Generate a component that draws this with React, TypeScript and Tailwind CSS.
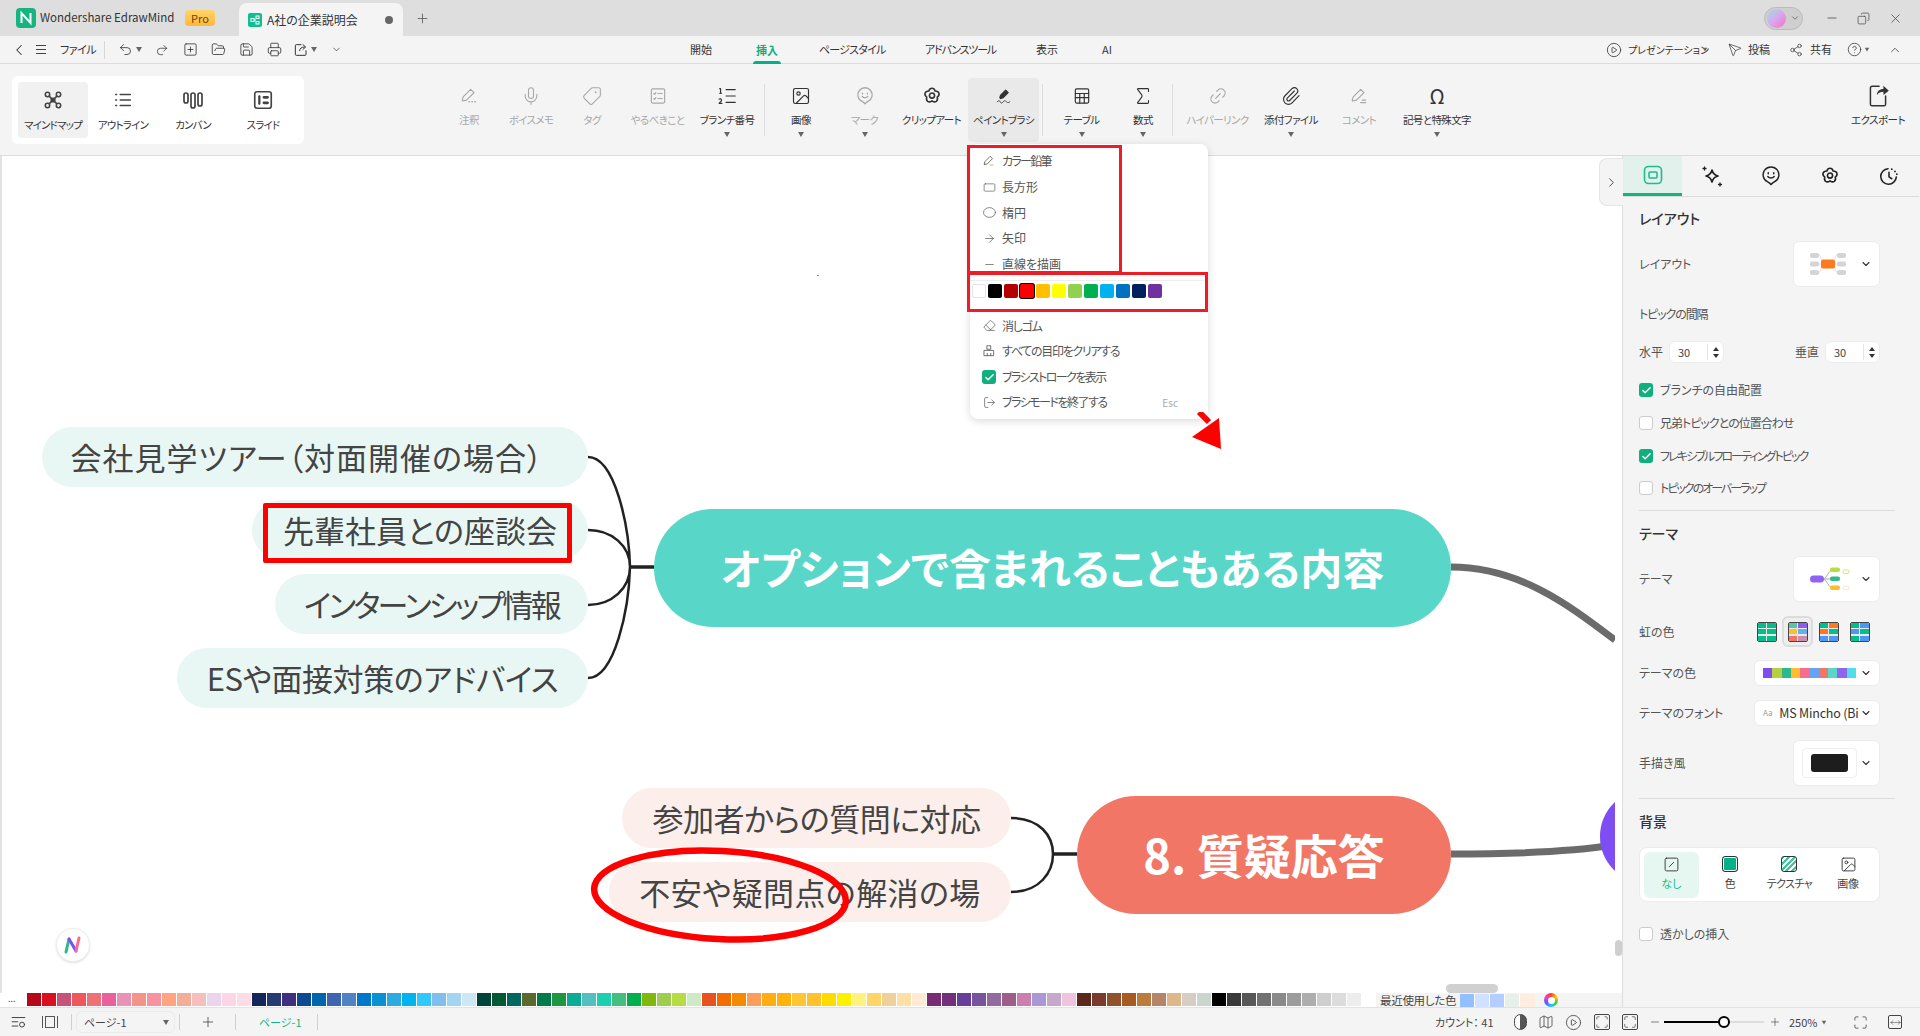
import React from 'react';
import {
  ChevronLeft, ChevronRight, ChevronDown, ChevronUp, Undo2, Redo2, SquarePlus, FolderOpen, Save, Printer, Plus, Minus, X, Copy,
  Mic, Tag, ListOrdered, Image, Sigma, Paperclip, Link2, CirclePlay, Send, Share2, CircleHelp, Check, SquareSlash,
  Eraser, LogOut, Square, Circle, ArrowRight, Map, Maximize, Scan, MoveHorizontal,
} from 'lucide-react';

const Caret = ({ className = '' }: { className?: string }) => (
  <span className={`inline-block w-0 h-0 border-x-[3.5px] border-x-transparent border-t-[5px] border-t-[#666] ${className}`} />
);

const S: React.FC<{ size?: number; children: React.ReactNode; sw?: number }> = ({ size = 20, children, sw = 1.4 }) => (
  <svg width={size} height={size} viewBox="0 0 24 24" fill="none" stroke="currentColor" strokeWidth={sw} strokeLinecap="round" strokeLinejoin="round">{children}</svg>
);

const MindIcon = () => (
  <S size={22} sw={1.7}><circle cx="6" cy="6" r="2.4" /><circle cx="18" cy="6" r="2.4" /><circle cx="6" cy="18" r="2.4" /><circle cx="18" cy="18" r="2.4" /><path d="M8 8l8 8M16 8l-8 8" /><circle cx="12" cy="12" r="2" /></S>
);
const OutlineIcon = () => (
  <S size={22} sw={1.7}><path d="M4 6h1M9 6h11M4 12h1M9 12h11M4 18h1M9 18h11" /></S>
);
const KanbanIcon = () => (
  <S size={24} sw={1.7}><rect x="3" y="5" width="4" height="10" rx="2" /><rect x="10" y="5" width="4" height="15" rx="2" /><rect x="17" y="5" width="4" height="13" rx="2" /></S>
);
const SlideIcon = () => (
  <S size={22} sw={1.8}><rect x="3" y="3" width="18" height="18" rx="2.5" /><path d="M8 8v8" strokeWidth="2.5" /><path d="M13 9h4M13 15h4" strokeWidth="3" /></S>
);
const NoteIcon = () => (
  <S><path d="M4 17l1-4L14 4l4 4-9 9-5 1z" /><path d="M12 19h.5M15.5 19h.5M19 19h.5" strokeWidth="1.8" /></S>
);
const TodoIcon = () => (
  <S><rect x="4" y="3.5" width="16" height="17" rx="1.5" /><path d="M7 9l1 1 1.5-2M12 9h5M7 15l1 1 1.5-2M12 15h5" /></S>
);
const PinSmile = ({ size = 20 }: { size?: number }) => (
  <S size={size} sw={1.6}><path d="M12 21.5c-1-1.5-2-2.2-3.6-3A8.6 8.6 0 1 1 15.6 18.5c-1.6.8-2.6 1.5-3.6 3z" /><path d="M9 8.5v1M15 8.5v1M8.5 12.5c1.8 2.2 5.2 2.2 7 0" /></S>
);
const Flower = ({ size = 20 }: { size?: number }) => (
  <S size={size} sw={1.7}><path d="M12 3.5c2 0 3 1.6 3.4 3 1.6 0 3.6.6 4.2 2.4.6 1.9-.7 3.3-1.9 4.2.5 1.5.6 3.6-1 4.8-1.6 1.1-3.4.3-4.7-.7-1.3 1-3.1 1.8-4.7.7-1.6-1.2-1.5-3.3-1-4.8-1.2-.9-2.5-2.3-1.9-4.2.6-1.8 2.6-2.4 4.2-2.4C9 5.1 10 3.5 12 3.5z" /><circle cx="12" cy="11.5" r="2.8" /></S>
);
const BrushIcon = () => (
  <S sw={1.5}><path d="M7 14l1-3 6-6 3 3-6 6-3 1z" fill="currentColor" /><path d="M4 19c1.5-2 2.5-2 3.5 0s2 2 3.5 0 2.5-1.5 4 0 2.5 1 4 0" strokeWidth="1" /></S>
);
const CalcTable = () => (
  <S><rect x="4" y="3.5" width="16" height="17" rx="1.5" /><path d="M4 9h16M4 14h16M9.3 9v11.5M14.7 9v11.5" /></S>
);
const CommentPen = () => (
  <S><path d="M4 17l1-4L14 4l4 4-9 9-5 1z" /><path d="M14 20h6M16 17h4" /></S>
);
const ExportIcon = () => (
  <S size={26} sw={1.4}><path d="M13 4H6.5A1.5 1.5 0 0 0 5 5.5v15A1.5 1.5 0 0 0 6.5 22h11a1.5 1.5 0 0 0 1.5-1.5V13" /><path d="M11 12c0-3.5 2.5-5.500 6-5.500V3.500l5 4.500-5 4V9c-2.500 0-4.500 1-6 3z" fill="currentColor" stroke="none" /></S>
);
const ShareBox = () => (
  <S size={16} sw={1.5}><path d="M12 4H5a1.500 1.500 0 0 0-1.500 1.500v13A1.500 1.500 0 0 0 5 20h13a1.500 1.500 0 0 0 1.500-1.500V13" /><path d="M10 13c0-3.500 3-5.500 7-5.500M15 4l4 3.500-4 3.500" /></S>
);

const modes = [
  { label: 'マインドマップ', icon: <MindIcon />, on: true },
  { label: 'アウトライン', icon: <OutlineIcon />, on: false },
  { label: 'カンバン', icon: <KanbanIcon />, on: false },
  { label: 'スライド', icon: <SlideIcon />, on: false },
];

const tools: { label: string; icon: React.ReactNode; w: string; off?: boolean; caret?: boolean; sel?: boolean; sep?: boolean }[] = [
  { label: '注釈', icon: <NoteIcon />, w: 'w-[62px]', off: true },
  { label: 'ボイスメモ', icon: <Mic size={20} strokeWidth={1.3} />, w: 'w-[62px]', off: true },
  { label: 'タグ', icon: <Tag size={20} strokeWidth={1.3} className="-scale-x-100" />, w: 'w-[60px]', off: true },
  { label: 'やるべきこと', icon: <TodoIcon />, w: 'w-[71px]', off: true },
  { label: 'ブランチ番号', icon: <ListOrdered size={22} strokeWidth={1.3} />, w: 'w-[68px]', caret: true, sep: true },
  { label: '画像', icon: <Image size={20} strokeWidth={1.4} />, w: 'w-[66px]', caret: true },
  { label: 'マーク', icon: <PinSmile />, w: 'w-[61px]', off: true, caret: true },
  { label: 'クリップアート', icon: <Flower size={22} />, w: 'w-[73px]' },
  { label: 'ペイントブラシ', icon: <BrushIcon />, w: 'w-[71px]', caret: true, sel: true, sep: true },
  { label: 'テーブル', icon: <CalcTable />, w: 'w-[71px]', caret: true },
  { label: '数式', icon: <Sigma size={22} strokeWidth={1.2} />, w: 'w-[52px]', caret: true, sep: true },
  { label: 'ハイパーリンク', icon: <Link2 size={20} strokeWidth={1.4} className="-rotate-45" />, w: 'w-[83px]', off: true },
  { label: '添付ファイル', icon: <Paperclip size={20} strokeWidth={1.4} />, w: 'w-[64px]', caret: true },
  { label: 'コメント', icon: <CommentPen />, w: 'w-[72px]', off: true },
  { label: '記号と特殊文字', icon: <span className="text-[20px] leading-5">Ω</span>, w: 'w-[84px]', caret: true },
];

const palette = [
  'bg-[#b5091a]', 'bg-[#d90f22]', 'bg-[#c9527b]', 'bg-[#f0575c]', 'bg-[#f07078]', 'bg-[#e9609e]', 'bg-[#e892b5]', 'bg-[#f4938a]', 'bg-[#f793a0]', 'bg-[#ffa380]', 'bg-[#f2ae96]', 'bg-[#f5bfbd]', 'bg-[#ecd5eb]', 'bg-[#fdd5e5]', 'bg-[#fcdde5]',
  'bg-[#14265a]', 'bg-[#263a73]', 'bg-[#3e2f7f]', 'bg-[#0e4a93]', 'bg-[#0066ab]', 'bg-[#3e65b0]', 'bg-[#5083c1]', 'bg-[#0076cc]', 'bg-[#0892d1]', 'bg-[#2eaae2]', 'bg-[#00b5ef]', 'bg-[#33c8fb]', 'bg-[#80bfec]', 'bg-[#a3d5f0]', 'bg-[#cde8f4]',
  'bg-[#00443a]', 'bg-[#005a34]', 'bg-[#00675f]', 'bg-[#5a6a2f]', 'bg-[#007b4c]', 'bg-[#1f9642]', 'bg-[#0bab96]', 'bg-[#52bfc0]', 'bg-[#1ccfb0]', 'bg-[#44bf80]', 'bg-[#00b050]', 'bg-[#82b80e]', 'bg-[#9fcd52]', 'bg-[#b5dc42]', 'bg-[#cfe8c6]',
  'bg-[#e8521f]', 'bg-[#f36c00]', 'bg-[#f58a00]', 'bg-[#fb9d5c]', 'bg-[#ffad10]', 'bg-[#ffb30a]', 'bg-[#ffc533]', 'bg-[#ffc22e]', 'bg-[#ffdc00]', 'bg-[#fff000]', 'bg-[#fff27f]', 'bg-[#ffd46b]', 'bg-[#eed098]', 'bg-[#ffdfa8]', 'bg-[#feebd2]',
  'bg-[#772c73]', 'bg-[#72307a]', 'bg-[#673f9b]', 'bg-[#77549c]', 'bg-[#956a9f]', 'bg-[#9d5f89]', 'bg-[#cc7faf]', 'bg-[#a998d4]', 'bg-[#c6a8cb]', 'bg-[#efc2dd]', 'bg-[#5c281b]', 'bg-[#7a3b2e]', 'bg-[#91522b]', 'bg-[#a85a20]', 'bg-[#bd7b3d]',
  'bg-[#b5856a]', 'bg-[#deb888]', 'bg-[#d6cdc5]', 'bg-[#c9d6cd]', 'bg-[#000000]', 'bg-[#3a3a3a]', 'bg-[#585858]', 'bg-[#727272]', 'bg-[#8a8a8a]', 'bg-[#9c9c9c]', 'bg-[#aeaeae]', 'bg-[#cecece]', 'bg-[#dcdcdc]', 'bg-[#ededed]', 'bg-[#ffffff]',
];

const brushColors = ['bg-white border border-[#e5e5e5]', 'bg-black', 'bg-[#b30000]', 'bg-[#ff0000] ring-1 ring-black', 'bg-[#ffc000]', 'bg-[#ffff00]', 'bg-[#92d050]', 'bg-[#00b050]', 'bg-[#00b0f0]', 'bg-[#0070c0]', 'bg-[#002060]', 'bg-[#7030a0]'];

const themeSwatches = ['bg-[#7f4ef3]', 'bg-[#b5cf3f]', 'bg-[#2fb98a]', 'bg-[#fdbd2e]', 'bg-[#f76d8e]', 'bg-[#63a4f6]', 'bg-[#f27665]', 'bg-[#58d7c9]', 'bg-[#9164f0]', 'bg-[#4ee0e8]'];

const Rainbow = ({ cells, sel }: { cells: string[]; sel?: boolean }) => (
  <div className={`w-[31px] h-[31px] flex items-center justify-center rounded-md ${sel ? 'bg-[#eee] border-2 border-[#dcdcdc]' : ''}`}>
    <div className="w-[20px] h-[20px] border-[1.5px] border-[#444] rounded-[2px] grid grid-cols-2 grid-rows-3 gap-[1.5px] bg-[#e8e8e8] overflow-hidden">
      {cells.map((c, i) => <div key={i} className={c} />)}
    </div>
  </div>
);

const Checkbox = ({ on }: { on?: boolean }) => (
  <span className={`w-[14px] h-[14px] rounded-[3px] shrink-0 flex items-center justify-center ${on ? 'bg-[#11ae7e]' : 'bg-white border border-[#ccc]'}`}>
    {on && <Check size={11} strokeWidth={3} className="text-white" />}
  </span>
);

const Select: React.FC<{ w: string; h: string; children: React.ReactNode }> = ({ w, h, children }) => (
  <div className={`${w} ${h} bg-white rounded-md border border-[#ececec] flex items-center justify-between pl-2 pr-[7px]`}>
    {children}
    <ChevronDown size={12} strokeWidth={2.2} className="text-[#333] shrink-0" />
  </div>
);

const Stepper = () => (
  <div className="w-[55px] h-[22px] bg-white rounded-md border border-[#ececec] flex items-center pl-2 text-[11px] text-[#444]">
    <span className="flex-1">30</span>
    <span className="w-[16px] h-[16px] border-l border-[#e5e5e5] flex flex-col items-center justify-center gap-[3px]">
      <span className="w-0 h-0 border-x-[3px] border-x-transparent border-b-[4px] border-b-[#333]" />
      <span className="w-0 h-0 border-x-[3px] border-x-transparent border-t-[4px] border-t-[#333]" />
    </span>
  </div>
);

const MenuItem: React.FC<{ icon: React.ReactNode; label: string; h: string; right?: string; ts?: string }> = ({ icon, label, h, right, ts = '' }) => (
  <div className={`${h} flex items-center pl-[12px] pr-[30px] text-[12px] text-[#555]`}>
    <span className="w-[14px] flex justify-center text-[#555]">{icon}</span>
    <span className={`ml-[6px] flex-1 whitespace-nowrap ${ts}`}>{label}</span>
    {right && <span className="text-[10px] text-[#aaa]">{right}</span>}
  </div>
);

const Pill: React.FC<{ className: string; children: React.ReactNode }> = ({ className, children }) => (
  <div className={`absolute h-[60px] rounded-[30px] flex items-center justify-center text-[31px] text-[#444] whitespace-nowrap ${className}`}>{children}</div>
);

const App: React.FC = () => {
  return (
    <div className="relative w-[1920px] h-[1036px] overflow-hidden flex flex-col bg-[#f4f4f4] text-[#333] [font-family:'Noto_Sans_CJK_JP','Noto_Sans',sans-serif] [font-feature-settings:'palt']">
      {/* Title bar */}
      <div className="h-[36px] shrink-0 bg-[#dedede] flex items-end">
        <div className="h-[36px] w-[239px] flex items-center pl-[16px]">
          <svg width="20" height="20" viewBox="0 0 20 20">
            <rect width="20" height="20" rx="4" fill="#16b47f" />
            <path d="M5.5 15V5l9 10V5" stroke="#fff" strokeWidth="2" fill="none" />
          </svg>
          <span className="ml-[4px] w-[135px] text-[11.5px] text-[#333] whitespace-nowrap">Wondershare EdrawMind</span>
          <span className="ml-[10px] w-[30px] h-[16px] rounded-[4px] bg-gradient-to-b from-[#ffd46a] to-[#ffb833] text-[#6b4300] text-[11px] leading-4 text-center">Pro</span>
        </div>
        <div className="w-[164px] h-[33px] bg-[#f4f4f4] rounded-t-lg flex items-center pl-[9px]">
          <span className="w-[14px] h-[14px] rounded-[2px] bg-[#0fbf8f] flex items-center justify-center">
            <svg width="10" height="10" viewBox="0 0 10 10" fill="none" stroke="#fff" strokeWidth="1"><rect x="1" y="3.5" width="3" height="3" /><rect x="6" y="1" width="3" height="2.5" /><rect x="6" y="6.5" width="3" height="2.5" /><path d="M4 5h2" /></svg>
          </span>
          <span className="ml-[5px] text-[12px] text-[#333] whitespace-nowrap">A社の企業説明会</span>
          <span className="ml-[27px] w-[8px] h-[8px] rounded-full bg-[#666]" />
        </div>
        <div className="h-[36px] flex items-center ml-[12px]"><Plus size={15} strokeWidth={1.3} className="text-[#555]" /></div>
        <div className="flex-1" />
        <div className="h-[36px] flex items-center">
          <div className="w-[39px] h-[23px] rounded-full bg-[#cfcfcf] border border-[#bbb] flex items-center pl-[2px]">
            <span className="w-[19px] h-[19px] rounded-full bg-gradient-to-br from-[#8fe0d8] via-[#d9a6f0] to-[#f56cc8]" />
            <ChevronDown size={10} strokeWidth={2} className="ml-[4px] text-[#666]" />
          </div>
          <Minus size={14} strokeWidth={1.3} className="ml-[22px] text-[#444]" />
          <Copy size={13} strokeWidth={1.3} className="ml-[18px] text-[#444] -scale-x-100" />
          <X size={15} strokeWidth={1.2} className="ml-[18px] mr-[17px] text-[#444]" />
        </div>
      </div>

      {/* Menu row */}
      <div className="h-[28px] shrink-0 border-b border-[#dcdcdc] flex items-center text-[11px] text-[#333] whitespace-nowrap">
        <ChevronLeft size={18} strokeWidth={1.4} className="ml-[10px]" />
        <span className="ml-[8px] flex flex-col gap-[3px] w-[10px]"><i className="h-px bg-[#444]" /><i className="h-px bg-[#444]" /><i className="h-px bg-[#444]" /></span>
        <span className="ml-[14px] w-[44px] tracking-[-0.5px]">ファイル</span>
        <span className="w-px h-[18px] bg-[#d8d8d8]" />
        <Undo2 size={15} strokeWidth={1.3} className="ml-[13px]" />
        <Caret className="ml-[3px]" />
        <Redo2 size={14} strokeWidth={1.3} className="ml-[13px]" />
        <SquarePlus size={15} strokeWidth={1.3} className="ml-[14px]" />
        <FolderOpen size={15} strokeWidth={1.3} className="ml-[13px]" />
        <Save size={15} strokeWidth={1.3} className="ml-[13px]" />
        <Printer size={15} strokeWidth={1.3} className="ml-[13px]" />
        <span className="ml-[11px]"><ShareBox /></span>
        <Caret className="ml-[2px]" />
        <ChevronDown size={11} strokeWidth={1.5} className="ml-[14px]" />
        <span className="ml-[348px] w-[22px]">開始</span>
        <span className="relative ml-[43px] w-[24px] h-[28px] leading-[28px] text-center font-bold text-[#10ad7e]">
          挿入
          <i className="absolute -left-[2px] -right-[2px] bottom-0 h-[3px] rounded-t-sm bg-[#00b386]" />
        </span>
        <span className="ml-[40px] w-[66px] tracking-[-0.8px]">ページスタイル</span>
        <span className="ml-[40px] w-[72px] tracking-[-1.2px]">アドバンスツール</span>
        <span className="ml-[39px] w-[24px]">表示</span>
        <span className="ml-[42px] w-[12px]">AI</span>
        <CirclePlay size={16} strokeWidth={1.2} className="ml-[492px]" />
        <span className="ml-[6px] w-[72px] text-[10px]">プレゼンテーション</span>
        <Caret className="ml-[2px] scale-75" />
        <Send size={14} strokeWidth={1.2} className="ml-[20px] -scale-x-100" />
        <span className="ml-[6px] w-[22px]">投稿</span>
        <Share2 size={14} strokeWidth={1.2} className="ml-[19px]" />
        <span className="ml-[7px] w-[22px]">共有</span>
        <CircleHelp size={15} strokeWidth={1.2} className="ml-[15px]" />
        <Caret className="ml-[2px] scale-75" />
        <ChevronUp size={14} strokeWidth={1.3} className="ml-[18px]" />
      </div>

      {/* Ribbon */}
      <div className="h-[92px] shrink-0 border-b border-[#dcdcdc] flex items-start">
        <div className="ml-[12px] mt-[12px] w-[292px] h-[68px] bg-white rounded-md flex items-center pl-[6px]">
          {modes.map(m => (
            <div key={m.label} className={`w-[70px] h-[56px] rounded flex flex-col items-center pt-[6px] ${m.on ? 'bg-[#f1f1f1]' : ''}`}>
              <div className="h-[24px] flex items-center text-[#444]">{m.icon}</div>
              <span className="mt-[5px] text-[10.5px] tracking-[-0.8px] text-[#333] whitespace-nowrap">{m.label}</span>
            </div>
          ))}
        </div>
        <div className="ml-[134px] flex items-start">
          {tools.map(t => (
            <React.Fragment key={t.label}>
              <div className={`${t.w} h-[64px] mt-[14px] rounded flex flex-col items-center pt-[6px] ${t.sel ? 'bg-[#e9e9e9]' : ''} ${t.off ? 'text-[#a8a8a8]' : 'text-[#333]'}`}>
                <div className="h-[24px] flex items-center">{t.icon}</div>
                <span className="mt-[5px] text-[10.5px] leading-[14px] tracking-[-0.6px] whitespace-nowrap">{t.label}</span>
                {t.caret && <Caret className="mt-[5px]" />}
              </div>
              {t.sep && <span className="w-px h-[52px] mt-[20px] bg-[#dcdcdc] mx-[3px]" />}
            </React.Fragment>
          ))}
        </div>
        <div className="flex-1" />
        <div className="mt-[14px] w-[64px] mr-[10px] flex flex-col items-center pt-[4px] text-[#333]">
          <ExportIcon />
          <span className="mt-[4px] text-[10.5px] tracking-[-0.5px] whitespace-nowrap">エクスポート</span>
        </div>
      </div>

      {/* Main */}
      <div className="flex-1 min-h-0 flex">
        <div className="w-[1623px] flex flex-col border-r border-[#dcdcdc]">
          <div className="flex-1 min-h-0 flex bg-white">
            <div className="relative w-[1615px] overflow-hidden border-l-2 border-[#e2e2e2] box-border">
              <svg className="absolute -left-[2px] top-0" width="1620" height="840" fill="none">
                <g stroke="#222" strokeWidth="2.5">
                  <path d="M588 301C615 301 629 370 630 411M588 374C612 374 630 390 630 411M588 449C612 449 630 432 630 411M588 522C615 522 629 452 630 411" />
                  <path d="M630 411H654" strokeWidth="3.5" />
                  <path d="M1011 662C1040 662 1053 680 1053 698M1011 736C1040 736 1053 716 1053 698" />
                  <path d="M1053 698H1077" strokeWidth="3.5" />
                </g>
                <path d="M1451 411C1520 411 1570 450 1615 484" stroke="#6b6b6b" strokeWidth="7" />
                <path d="M1451 698C1500 698 1570 696 1615 689" stroke="#6b6b6b" strokeWidth="7" />
              </svg>
              <Pill className="left-[40px] top-[271px] w-[546px] pr-[16px] tracking-[1px] bg-[#e9f7f4]">会社見学ツアー（対面開催の場合）</Pill>
              <Pill className="left-[250px] top-[344px] w-[336px] bg-[#e9f7f4]">先輩社員との座談会</Pill>
              <Pill className="left-[273px] top-[418px] w-[313px] tracking-[-2.7px] bg-[#e9f7f4]">インターンシップ情報</Pill>
              <Pill className="left-[175px] top-[492px] w-[411px] tracking-[-0.4px] bg-[#e9f7f4]">ESや面接対策のアドバイス</Pill>
              <Pill className="left-[620px] top-[632px] w-[389px] tracking-[-0.5px] bg-[#fbeeeb]">参加者からの質問に対応</Pill>
              <Pill className="left-[607px] top-[706px] w-[402px] tracking-[0.4px] bg-[#fbeeeb]">不安や疑問点の解消の場</Pill>
              <div className="absolute left-[652px] top-[353px] w-[797px] h-[118px] rounded-[59px] bg-[#58d7c9] flex items-center justify-center pb-[4px] text-white font-bold text-[42px] whitespace-nowrap">オプションで含まれることもある内容</div>
              <div className="absolute left-[1075px] top-[640px] w-[374px] h-[118px] rounded-[59px] bg-[#f27665] flex items-center justify-center pb-[2px] text-white font-bold text-[47px] whitespace-nowrap">8. 質疑応答</div>
              <div className="absolute left-[1598px] top-[634px] w-[200px] h-[93px] rounded-[46px] bg-[#7f4ef3]" />
              <div className="absolute left-[261px] top-[347px] w-[309px] h-[60px] border-[5px] border-[#ff0000] rounded-[2px]" />
              <svg className="absolute left-[585px] top-[685px]" width="270" height="110" fill="none">
                <ellipse cx="133" cy="54" rx="126" ry="44" stroke="#ff0000" strokeWidth="6.5" transform="rotate(3 133 54)" />
              </svg>
              <i className="absolute left-[815px] top-[119px] w-[2px] h-[1px] bg-[#888]" />
              <div className="absolute left-[54px] top-[772px] w-[34px] h-[34px] rounded-full bg-white border border-[#eee] shadow-sm flex items-center justify-center">
                <svg width="20" height="18" viewBox="0 0 20 18" fill="none" strokeWidth="3" strokeLinecap="round">
                  <path d="M3 16L6 3" stroke="#2fb98a" /><path d="M6 3l7 12" stroke="#7f4ef3" /><path d="M13 15l3-13" stroke="#f76d8e" />
                </svg>
              </div>
            </div>
            <div className="w-[7px] flex flex-col pt-[784px]"><i className="h-[16px] rounded bg-[#cfcfcf]" /></div>
          </div>
          <div className="relative h-[14px] shrink-0 bg-white flex">
            <span className="absolute left-[1446px] -top-[9px] w-[52px] h-[9px] rounded-full bg-[#d0d0d0]" />
            <span className="w-[27px] text-[9px] leading-[12px] text-[#444] pl-[8px]">...</span>
            <div className="w-[1349px] flex items-start">
              {palette.map((c, i) => <span key={i} className={`w-[15px] h-[13px] shrink-0 border-r border-white ${c}`} />)}
            </div>
            <div className="flex-1 bg-[#f4f4f4] flex items-center pl-[4px]">
              <span className="w-[80px] text-[11.5px] leading-[13px] tracking-[-0.3px] text-[#444] whitespace-nowrap">最近使用した色</span>
              <span className="w-[15px] h-[13px] bg-[#93bfff] border-r border-white" />
              <span className="w-[15px] h-[13px] bg-[#d0e2ff] border-r border-white" />
              <span className="w-[15px] h-[13px] bg-[#b5ceff] border-r border-white" />
              <span className="w-[15px] h-[13px] bg-[#e6f0e8] border-r border-white" />
              <span className="w-[15px] h-[13px] bg-[#fdeee0]" />
              <span className="ml-[9px] w-[14px] h-[14px] rounded-full bg-[conic-gradient(#ff3b3b,#ffc800,#35d04a,#20c5ff,#5a5aff,#f040c0,#ff3b3b)] flex items-center justify-center">
                <i className="w-[7px] h-[7px] rounded-full bg-white" />
              </span>
            </div>
          </div>
        </div>

        {/* Right panel */}
        <div className="relative w-[296px] shrink-0 text-[12px] text-[#555] whitespace-nowrap">
          <div className="absolute -left-[24px] top-[2px] w-[24px] h-[48px] rounded-l-lg bg-[#f4f4f4] border border-r-0 border-[#e4e4e4] flex items-center justify-center">
            <ChevronRight size={15} strokeWidth={1.5} className="text-[#444]" />
          </div>
          <div className="h-[41px] border-b border-[#dcdcdc] flex text-[#222]">
            <div className="w-[59px] h-[40px] bg-[#e2f1ec] border-b-[3px] border-[#10b582] flex items-center justify-center text-[#1dbd8c]">
              <S size={24} sw={1.6}><rect x="3.5" y="3.5" width="17" height="17" rx="4" /><rect x="8" y="9" width="8" height="6" rx="1" /></S>
            </div>
            <div className="w-[60px] flex items-center justify-center">
              <S size={24} sw={1.7}><path d="M12 6c.8 3.2 2.5 5.2 6 6-3.5.8-5.2 2.8-6 6-.8-3.2-2.5-5.2-6-6 3.5-.8 5.2-2.8 6-6z" /><path d="M4.5 3v3M3 4.5h3M20 19v3M18.5 20.5h3" strokeWidth="1.3" /></S>
            </div>
            <div className="w-[58px] flex items-center justify-center"><PinSmile size={22} /></div>
            <div className="w-[60px] flex items-center justify-center"><Flower size={22} /></div>
            <div className="w-[58px] flex items-center justify-center">
              <S size={22} sw={1.7}><path d="M11 4a8.5 8.5 0 1 0 9 9" /><path d="M12 8v5l3 2" /><path d="M15 4.5h.01M18.5 7h.01M20.5 10h.01" strokeWidth="2" /></S>
            </div>
          </div>

          <div className="pl-[16px] pr-[24px]">
            <div className="mt-[11px] h-[20px] leading-[20px] text-[14px] font-medium text-[#333]">レイアウト</div>
            <div className="mt-[13px] h-[46px] flex items-center justify-between pr-[15px]">
              <span>レイアウト</span>
              <Select w="w-[87px]" h="h-[46px]">
                <svg width="38" height="26" viewBox="0 0 38 26" className="ml-[7px]" fill="none">
                  <g fill="#d4d4d4"><rect x="1" y="2" width="9" height="5" rx="2" /><rect x="1" y="10.5" width="9" height="5" rx="2" /><rect x="1" y="19" width="9" height="5" rx="2" /><rect x="28" y="2" width="9" height="5" rx="2" /><rect x="28" y="10.5" width="9" height="5" rx="2" /><rect x="28" y="19" width="9" height="5" rx="2" /></g>
                  <path d="M10 4c3 0 2 9 4 9M10 21c3 0 2-8 4-8M28 4c-3 0-2 9-4 9M28 21c-3 0-2-8-4-8M10 13h4M24 13h4" stroke="#e0e0e0" />
                  <rect x="12" y="8.5" width="14" height="9" rx="2" fill="#ff7a1f" />
                </svg>
              </Select>
            </div>
            <div className="mt-[17px] h-[20px] leading-[20px] tracking-[-1.1px]">トピックの間隔</div>
            <div className="mt-[17px] h-[22px] flex items-center">
              <span className="w-[30px]">水平</span>
              <Stepper />
              <span className="ml-[71px] w-[30px]">垂直</span>
              <Stepper />
            </div>
            <div className="mt-[17px] h-[20px] flex items-center gap-[7px]"><Checkbox on />ブランチの自由配置</div>
            <div className="mt-[13px] h-[20px] flex items-center gap-[7px]"><Checkbox /><span className="tracking-[-1px]">兄弟トピックとの位置合わせ</span></div>
            <div className="mt-[13px] h-[20px] flex items-center gap-[7px]"><Checkbox on /><span className="tracking-[-1.9px]">フレキシブルフローティングトピック</span></div>
            <div className="mt-[12px] h-[20px] flex items-center gap-[7px]"><Checkbox /><span className="tracking-[-2px]">トピックのオーバーラップ</span></div>
            <div className="mt-[12px] h-px bg-[#dcdcdc]" />
            <div className="mt-[12px] h-[20px] leading-[20px] text-[14px] font-medium text-[#333]">テーマ</div>
            <div className="mt-[13px] h-[46px] flex items-center justify-between pr-[15px]">
              <span>テーマ</span>
              <Select w="w-[87px]" h="h-[46px]">
                <svg width="44" height="26" viewBox="0 0 44 26" className="ml-[8px]" fill="none">
                  <path d="M12 13C18 13 17 4 24 4M12 13h14M12 13C18 13 17 22 24 22" stroke="#aaa" />
                  <rect x="0" y="9.5" width="14" height="7" rx="3.5" fill="#8f63f3" />
                  <rect x="20" y="1.5" width="10" height="4.5" rx="2" fill="#b5dc42" />
                  <rect x="20" y="10.5" width="10" height="4.5" rx="2" fill="#2fb98a" />
                  <rect x="20" y="19.5" width="10" height="4.5" rx="2" fill="#fdbd2e" />
                  <rect x="33" y="4" width="6" height="3.5" rx="1.5" stroke="#b5dc42" strokeWidth=".7" />
                  <rect x="33" y="20" width="6" height="3.5" rx="1.5" stroke="#fdd9a0" strokeWidth=".7" />
                </svg>
              </Select>
            </div>
            <div className="mt-[14px] h-[31px] flex items-center justify-between pr-[20px]">
              <span>虹の色</span>
              <div className="flex">
                <Rainbow cells={['bg-[#00bf8c]', 'bg-[#00bf8c]', 'bg-[#00bf8c]', 'bg-[#00bf8c]', 'bg-[#00bf8c]', 'bg-[#00bf8c]']} />
                <Rainbow sel cells={['bg-[#5bc4a5]', 'bg-[#8a5cf0]', 'bg-[#fdbd2e]', 'bg-[#63b0f0]', 'bg-[#f27665]', 'bg-[#c88fb0]']} />
                <Rainbow cells={['bg-[#00bf8c]', 'bg-[#ff7a1f]', 'bg-[#ff7a1f]', 'bg-[#00bf8c]', 'bg-[#4f97f5]', 'bg-[#4f97f5]']} />
                <Rainbow cells={['bg-[#00bf8c]', 'bg-[#4f97f5]', 'bg-[#4f97f5]', 'bg-[#00bf8c]', 'bg-[#00bf8c]', 'bg-[#4f97f5]']} />
              </div>
            </div>
            <div className="mt-[13px] h-[26px] flex items-center justify-between pr-[15px]">
              <span>テーマの色</span>
              <Select w="w-[126px]" h="h-[26px]">
                <div className="flex">{themeSwatches.map((c, i) => <i key={i} className={`w-[9.3px] h-[10px] ${c}`} />)}</div>
              </Select>
            </div>
            <div className="mt-[14px] h-[26px] flex items-center justify-between pr-[15px]">
              <span>テーマのフォント</span>
              <Select w="w-[126px]" h="h-[26px]">
                <span className="text-[8px] text-[#999]">Aa</span>
                <span className="ml-[6px] w-[80px] text-[12.5px] tracking-[-0.2px] text-[#333]">MS Mincho (Bi</span>
              </Select>
            </div>
            <div className="mt-[14px] h-[46px] flex items-center justify-between pr-[15px]">
              <span>手描き風</span>
              <Select w="w-[87px]" h="h-[46px]">
                <div className="w-[55px] h-[30px] border border-[#eee] rounded-sm flex items-center justify-center">
                  <i className="w-[37px] h-[18px] rounded-[3px] bg-[#1d1d1d]" />
                </div>
              </Select>
            </div>
            <div className="mt-[12px] h-px bg-[#dcdcdc]" />
            <div className="mt-[12px] h-[20px] leading-[20px] text-[14px] font-medium text-[#333]">背景</div>
            <div className="mt-[16px] mr-[15px] h-[55px] bg-white rounded-lg border border-[#ececec] flex items-center pl-[4px] text-[11px] text-[#444]">
              <div className="w-[55px] h-[46px] rounded-md bg-[#e6f7f2] flex flex-col items-center pt-[4px] text-[#18bd8c]">
                <SquareSlash size={17} strokeWidth={1.3} className="text-[#333]" />
                <span className="mt-[2px]">なし</span>
              </div>
              <div className="w-[63px] h-[46px] flex flex-col items-center pt-[4px]">
                <span className="w-[16px] h-[16px] rounded-[3px] border border-[#333] bg-[#00b386] ring-1 ring-inset ring-white" />
                <span className="mt-[3px]">色</span>
              </div>
              <div className="w-[56px] h-[46px] flex flex-col items-center pt-[4px]">
                <span className="w-[16px] h-[16px] rounded-[3px] border border-[#333] bg-[repeating-linear-gradient(135deg,#3ec79c_0,#3ec79c_2px,#fff_2px,#fff_4px)]" />
                <span className="mt-[3px] tracking-[-0.6px]">テクスチャ</span>
              </div>
              <div className="w-[62px] h-[46px] flex flex-col items-center pt-[4px]">
                <Image size={17} strokeWidth={1.3} className="text-[#333]" />
                <span className="mt-[2px]">画像</span>
              </div>
            </div>
            <div className="mt-[22px] h-[20px] flex items-center gap-[7px]"><Checkbox />透かしの挿入</div>
          </div>
        </div>
      </div>

      {/* Status bar */}
      <div className="h-[29px] shrink-0 border-t border-[#e2e2e2] flex items-center text-[11px] text-[#444] whitespace-nowrap">
        <span className="ml-[10px] w-[17px]"><S size={17}><path d="M3 5h18M3 11h8M3 17h8" /><circle cx="17" cy="15" r="3.5" /></S></span>
        <span className="ml-[15px] flex items-center gap-[2px]"><i className="w-px h-[12px] bg-[#555]" /><i className="w-[10px] h-[12px] border border-[#555]" /><i className="w-px h-[12px] bg-[#555]" /></span>
        <i className="ml-[13px] w-px h-[16px] bg-[#d0d0d0]" />
        <div className="ml-[4px] w-[99px] h-[22px] rounded-md border border-[#eaeaea] flex items-center pl-[7px] pr-[5px]">
          <span className="flex-1">ページ-1</span><Caret />
        </div>
        <i className="ml-[4px] w-px h-[16px] bg-[#d0d0d0]" />
        <Plus size={16} strokeWidth={1.2} className="ml-[20px]" />
        <i className="ml-[19px] w-px h-[16px] bg-[#d0d0d0]" />
        <span className="ml-[23px] w-[58px] text-[#11b585]">ページ-1</span>
        <i className="w-px h-[16px] bg-[#d0d0d0]" />
        <span className="ml-[1117px] w-[62px]">カウント： 41</span>
        <span className="ml-[17px] w-[13px] h-[16px] rounded-full border border-[#444] bg-[linear-gradient(90deg,#fff_50%,#555_50%)]" />
        <Map size={16} strokeWidth={1.2} className="ml-[11px]" />
        <CirclePlay size={17} strokeWidth={1.2} className="ml-[11px]" />
        <Scan size={16} strokeWidth={1.2} className="ml-[12px] border border-[#444] rounded-[2px]" />
        <Maximize size={16} strokeWidth={1.2} className="ml-[12px] border border-[#444] rounded-[2px]" />
        <Minus size={12} strokeWidth={1.3} className="ml-[11px]" />
        <div className="relative ml-[3px] w-[100px] h-[2px] bg-[#ddd]">
          <i className="block w-[60px] h-[2px] bg-black" />
          <i className="absolute left-[54px] -top-[5px] w-[12px] h-[12px] rounded-full bg-white border-[2.5px] border-black" />
        </div>
        <Plus size={12} strokeWidth={1.3} className="ml-[5px]" />
        <span className="ml-[8px] w-[30px]">250%</span>
        <Caret className="ml-[2px] scale-75" />
        <Maximize size={15} strokeWidth={1.3} className="ml-[26px]" />
        <span className="ml-[20px] w-[14px] h-[14px] border border-[#444] rounded-[2px] flex items-center justify-center"><MoveHorizontal size={11} strokeWidth={1.2} /></span>
      </div>

      {/* Paint brush menu */}
      <div className="absolute left-[970px] top-[144px] w-[238px] h-[275px] bg-white rounded-lg shadow-[0_2px_8px_rgba(0,0,0,0.15)] flex flex-col pt-[4px]">
        <MenuItem h="h-[26px]" label="カラー鉛筆" ts="tracking-[-1.7px]" icon={<S size={14}><path d="M4 17l1-4L14 4l4 4-9 9-5 1z" /><path d="M14 19h5" stroke="#f0a020" /></S>} />
        <MenuItem h="h-[26px]" label="長方形" icon={<Square size={13} strokeWidth={1.3} className="scale-x-110 scale-y-75" />} />
        <MenuItem h="h-[25px]" label="楕円" icon={<Circle size={13} strokeWidth={1.3} className="scale-x-110 scale-y-90" />} />
        <MenuItem h="h-[26px]" label="矢印" icon={<ArrowRight size={13} strokeWidth={1.3} />} />
        <MenuItem h="h-[26px]" label="直線を描画" icon={<Minus size={13} strokeWidth={1.3} />} />
        <div className="mt-[3px] h-px bg-[#eee]" />
        <div className="h-[32px] flex items-start gap-[2px] pl-[2px] pt-[3px]">
          {brushColors.map((c, i) => <span key={i} className={`w-[14px] h-[14px] rounded-[2px] ${c}`} />)}
        </div>
        <MenuItem h="h-[25px]" label="消しゴム" ts="tracking-[-1.2px]" icon={<Eraser size={13} strokeWidth={1.3} />} />
        <MenuItem h="h-[26px]" label="すべての目印をクリアする" ts="tracking-[-1.3px]" icon={<S size={14}><rect x="9" y="3" width="6" height="6" /><path d="M4 11h16v9H4zM9 20v-4M15 20v-4" /></S>} />
        <MenuItem h="h-[26px]" label="ブラシストロークを表示" ts="tracking-[-1.6px]" icon={<Checkbox on />} />
        <MenuItem h="h-[24px]" label="ブラシモードを終了する" ts="tracking-[-1.5px]" right="Esc" icon={<LogOut size={13} strokeWidth={1.3} />} />
      </div>
      <div className="absolute left-[967px] top-[145px] w-[155px] h-[129px] border-[3.5px] border-[#ee1c25]" />
      <div className="absolute left-[967px] top-[272px] w-[241px] h-[40px] border-[3.5px] border-[#ee1c25]" />

      {/* Red arrow */}
      <svg className="absolute left-[1185px] top-[412px]" width="42" height="42" viewBox="0 0 42 42">
        <path d="M14 0l10 10" stroke="#ff0000" strokeWidth="6" />
        <path d="M7 25L34 6l2 31z" fill="#ff0000" />
      </svg>
    </div>
  );
};

export default App;
